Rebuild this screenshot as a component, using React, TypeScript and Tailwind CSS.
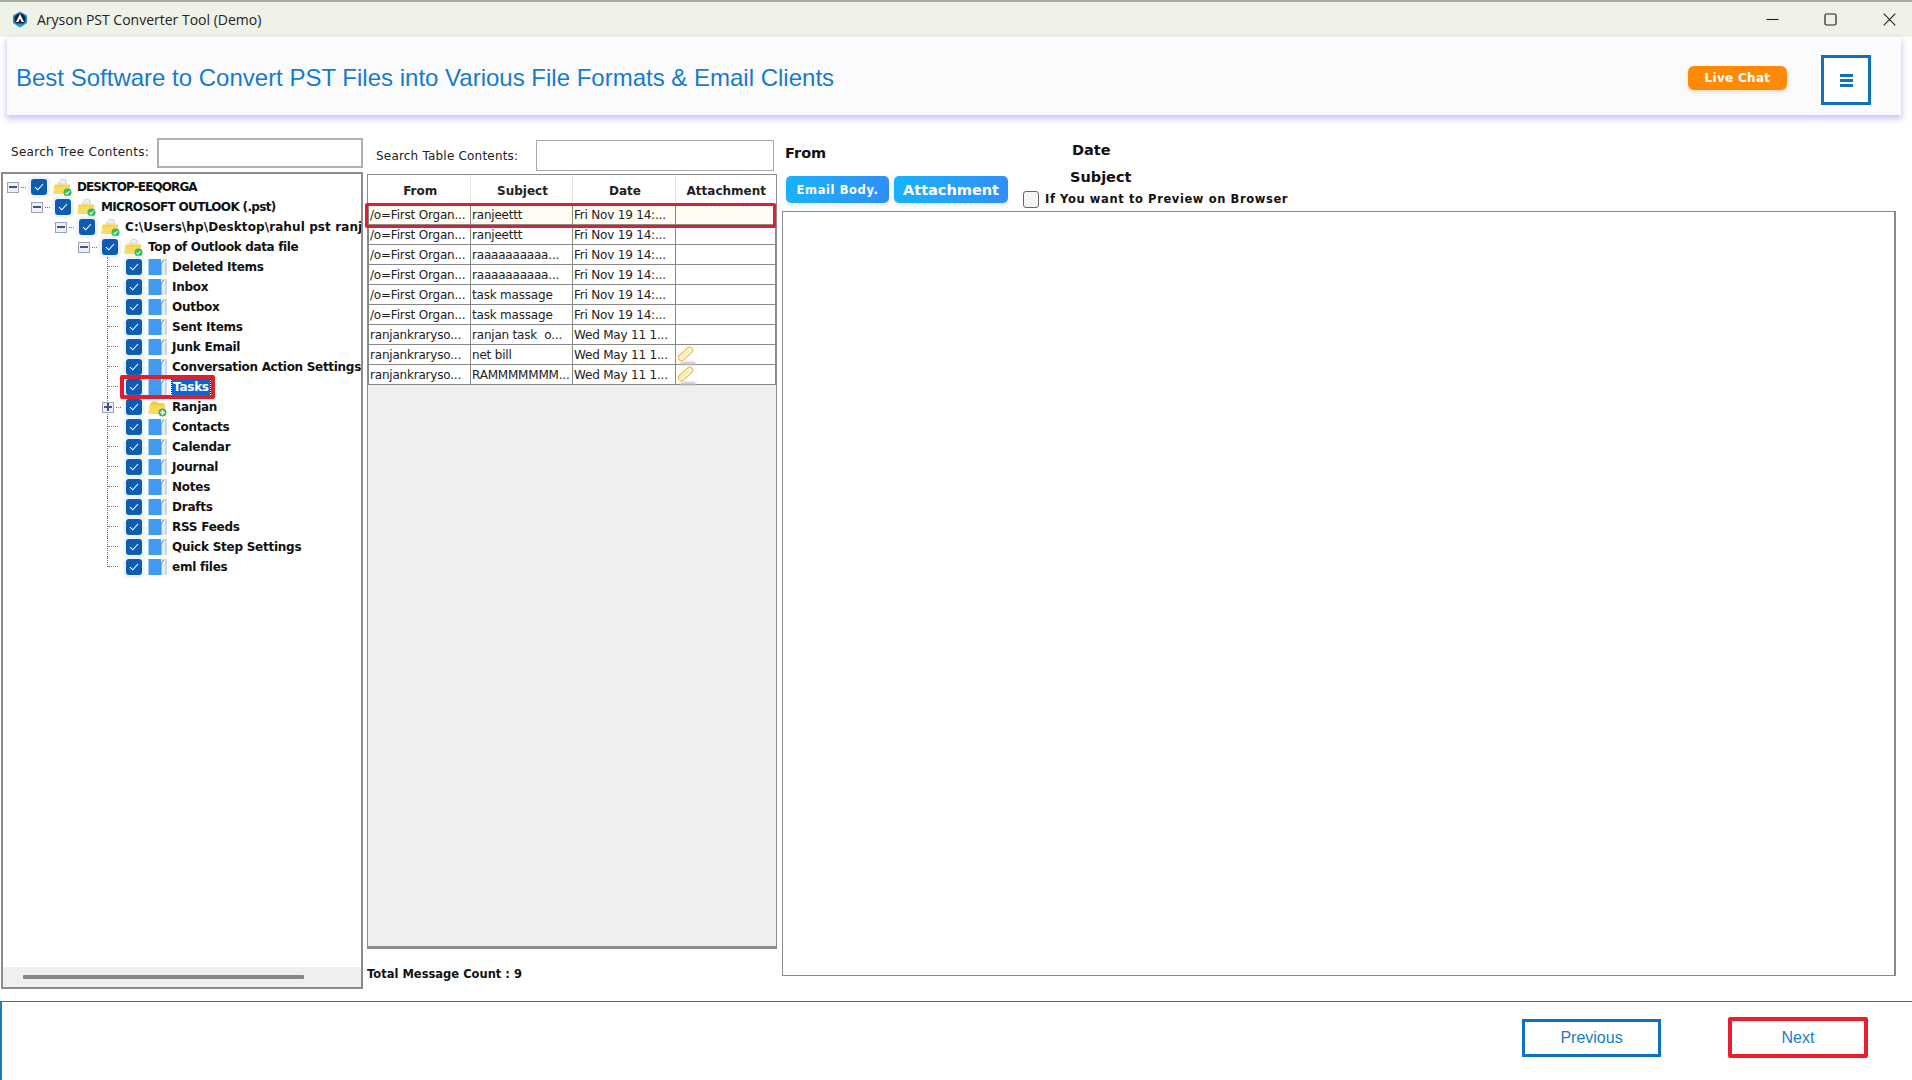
const DEJAVU = "font-['DejaVu_Sans',sans-serif]";

const TREE = [
  { label: "DESKTOP-EEQORGA", level: 0, icon: "folder", expander: "minus", track: "tracking-[-0.9px]" },
  { label: "MICROSOFT OUTLOOK (.pst)", level: 1, icon: "folder", expander: "minus", track: "tracking-[-0.65px]" },
  { label: "C:\\Users\\hp\\Desktop\\rahul pst ranj", level: 2, icon: "folder", expander: "minus", track: "tracking-[0.1px]" },
  { label: "Top of Outlook data file", level: 3, icon: "folder", expander: "minus", track: "tracking-[-0.35px]" },
  { label: "Deleted Items", level: 4, icon: "doc" },
  { label: "Inbox", level: 4, icon: "doc" },
  { label: "Outbox", level: 4, icon: "doc" },
  { label: "Sent Items", level: 4, icon: "doc" },
  { label: "Junk Email", level: 4, icon: "doc" },
  { label: "Conversation Action Settings", level: 4, icon: "doc", track: "tracking-[-0.3px]" },
  { label: "Tasks", level: 4, icon: "doc", selected: true },
  { label: "Ranjan", level: 4, icon: "folderPlus", expander: "plus" },
  { label: "Contacts", level: 4, icon: "doc" },
  { label: "Calendar", level: 4, icon: "doc" },
  { label: "Journal", level: 4, icon: "doc" },
  { label: "Notes", level: 4, icon: "doc" },
  { label: "Drafts", level: 4, icon: "doc" },
  { label: "RSS Feeds", level: 4, icon: "doc" },
  { label: "Quick Step Settings", level: 4, icon: "doc" },
  { label: "eml files", level: 4, icon: "doc" },
];

const ROWS = [
  ["/o=First Organ...", "ranjeettt", "Fri Nov 19 14:...", false],
  ["/o=First Organ...", "ranjeettt", "Fri Nov 19 14:...", false],
  ["/o=First Organ...", "raaaaaaaaaa...", "Fri Nov 19 14:...", false],
  ["/o=First Organ...", "raaaaaaaaaa...", "Fri Nov 19 14:...", false],
  ["/o=First Organ...", "task massage", "Fri Nov 19 14:...", false],
  ["/o=First Organ...", "task massage", "Fri Nov 19 14:...", false],
  ["ranjankraryso...", "ranjan task  o...", "Wed May 11 1...", false],
  ["ranjankraryso...", "net bill", "Wed May 11 1...", true],
  ["ranjankraryso...", "RAMMMMMMM...", "Wed May 11 1...", true],
] as const;

function Logo() {
  return (
    <svg width="16" height="17" viewBox="0 0 16 17">
      <path d="M8 0.5 15 4.5V12L8 16.5 1 12V4.5Z" fill="#1d8fd6" />
      <circle cx="8" cy="8" r="5.6" fill="#16233a" />
      <path d="M8 3 12 11H9.6L8 7.6 6.4 11H4Z" fill="#ffffff" />
      <path d="M5 12.5H11L8 15Z" fill="#2b9be0" />
    </svg>
  );
}

function Check() {
  return (
    <span className="flex h-4 w-4 shrink-0 items-center justify-center rounded-[3px] bg-[#0b5cb5] shadow-[0_0_2px_3px_#eef2f6]">
      <svg width="10" height="8" viewBox="0 0 10 8" fill="none">
        <path d="M1 4.2 3.8 6.8 9 1" stroke="#ffffff" strokeWidth="1.1" />
      </svg>
    </span>
  );
}

function FolderIcon({ badge }: { badge: "check" | "plus" }) {
  return (
    <svg width="19" height="19" viewBox="0 0 19 19" className="shrink-0">
      {badge === "check" && <path d="M5 6 8.5 0.8 13 2.2 13.5 6Z" fill="#eceef2" stroke="#b9bdc6" strokeWidth="0.6" />}
      {badge === "plus" && <path d="M2 6 4 3.5H9L10.5 5H16V8H2Z" fill="#f2c93f" />}
      <path d="M1.5 6.5H17V16H0.5Z" fill="#f6d44e" />
      <path d="M1 9H17V16H0.5Z" fill="#f8dc62" />
      <circle cx="14.5" cy="14.5" r="4" fill="#37b85a" />
      {badge === "plus" ? (
        <path d="M14.5 12V17M12 14.5H17" stroke="#ffffff" strokeWidth="1.4" />
      ) : (
        <path d="M12.6 14.6 14 16 16.5 13" stroke="#ffffff" strokeWidth="1.1" fill="none" />
      )}
    </svg>
  );
}

function DocIcon() {
  return (
    <svg width="19" height="18" viewBox="0 0 19 18" className="shrink-0">
      <rect x="0.5" y="1" width="12.5" height="16" fill="#429bf2" />
      <path d="M13 1H18V17H13Z" fill="#e4eef9" />
      <path d="M13 6 16 1.5" stroke="#3a8fe6" strokeWidth="1" fill="none" />
      <path d="M13 6V17" stroke="#3a8fe6" strokeWidth="1" />
      <path d="M18 1V17" stroke="#8fbce9" strokeWidth="1" />
    </svg>
  );
}

function Expander({ kind }: { kind: string }) {
  return (
    <span className="relative flex h-[11px] w-[12px] shrink-0 items-center justify-center border border-[#9aa3b2] bg-[#eef0f5]">
      <span className="h-[2px] w-[8px] bg-[#44528a]" />
      {kind === "plus" && <span className="absolute h-[8px] w-[2px] bg-[#44528a]" />}
      <span className="absolute left-[13px] top-1/2 w-[5px] border-t border-dotted border-[#777]" />
    </span>
  );
}

function TreeRow({ item, last }: { item: (typeof TREE)[number]; last: boolean }) {
  const leaf = item.level === 4;
  return (
    <div className="relative flex h-5 items-center">
      <span style={{ width: item.level * 24 + (item.level < 3 ? 4 : 3) }} className="shrink-0" />
      <span className="relative flex h-5 w-[12px] shrink-0 items-center">
        {leaf && (
          <span className={`absolute left-[5px] top-0 border-l border-dotted border-[#777] ${last ? "h-[10px]" : "h-5"}`} />
        )}
        {leaf && !item.expander && <span className="absolute left-[6px] top-[9px] w-[10px] border-t border-dotted border-[#777]" />}
        {item.expander && <Expander kind={item.expander} />}
      </span>
      <span className="ml-[12px] flex items-center">
        <Check />
        <span className="ml-[6px]">
          {item.icon === "doc" ? <DocIcon /> : <FolderIcon badge={item.icon === "folderPlus" ? "plus" : "check"} />}
        </span>
      </span>
      <span
        className={`ml-[5px] whitespace-nowrap text-[12px] leading-4 font-bold ${item.track ?? "tracking-[-0.25px]"} ${
          item.selected ? "bg-[#0a68cf] px-px text-white outline-1 outline-dotted outline-[#111]" : "text-[#111]"
        }`}
      >
        {item.label}
      </span>
      {item.selected && (
        <span className="absolute left-[117px] top-[-2px] z-10 h-[24px] w-[95px] rounded-[2px] border-[4px] border-[#e11d2e]" />
      )}
    </div>
  );
}

function Paperclip() {
  return (
    <span className="relative flex h-[19px] w-[20px] items-center">
      <span className="absolute bottom-[-1px] left-[4px] h-[3px] w-[16px] rounded-full bg-[#c4c4c4] blur-[1px]" />
      <svg width="19" height="19" viewBox="0 0 19 19" fill="none" className="relative">
        <rect x="1" y="6" width="17" height="6" rx="3" transform="rotate(-42 9.5 9)" stroke="#f3bb4a" strokeWidth="1.2" fill="#fffaf0" />
        <path d="M4.5 13 13.5 5" stroke="#f7cf7c" strokeWidth="1" />
      </svg>
    </span>
  );
}

export default function App() {
  return (
    <div className={`flex h-[1080px] w-[1912px] flex-col overflow-hidden bg-white ${DEJAVU}`}>
      {/* title bar */}
      <div className="flex h-[37px] shrink-0 items-center border-t-2 border-[#a9ab9f] bg-[#eff2e6]">
        <span className="ml-[12px]">
          <Logo />
        </span>
        <span className="ml-[9px] font-['Open_Sans',sans-serif] text-[14px] text-[#222]">Aryson PST Converter Tool (Demo)</span>
        <div className="ml-auto flex items-center pr-[16px]">
          <svg width="13" height="13" viewBox="0 0 13 13" className="mr-[45px]">
            <path d="M0.5 6.5H12.5" stroke="#222" strokeWidth="1.1" />
          </svg>
          <svg width="13" height="13" viewBox="0 0 13 13" className="mr-[46px]">
            <rect x="1" y="1" width="11" height="11" rx="1.5" fill="none" stroke="#222" strokeWidth="1.2" />
          </svg>
          <svg width="13" height="13" viewBox="0 0 13 13">
            <path d="M0.7 0.7 12.3 12.3M12.3 0.7 0.7 12.3" stroke="#222" strokeWidth="1.1" />
          </svg>
        </div>
      </div>

      {/* banner */}
      <div className="ml-[7px] mr-[11px] flex h-[78px] shrink-0 items-center bg-[#fbfbfe] pt-[4px] shadow-[0_3px_6px_1px_#c9c9f8]">
        <h1 className="ml-[9px] font-['Liberation_Sans',sans-serif] text-[24px] font-normal text-[#167bcd]">
          Best Software to Convert PST Files into Various File Formats &amp; Email Clients
        </h1>
        <button className="ml-auto flex h-[24px] w-[99px] items-center justify-center rounded-[6px] bg-[#ff8a05] text-[12px] font-bold tracking-[0.3px] text-white shadow-[0_2px_4px_#e9dcc8]">
          Live Chat
        </button>
        <button className="ml-[34px] mr-[30px] mt-[4px] flex h-[50px] w-[50px] flex-col items-center justify-center gap-[2px] border-[3px] border-[#0f70bd] bg-white">
          <span className="h-[3px] w-[13px] bg-[#0f70bd]" />
          <span className="h-[3px] w-[13px] bg-[#0f70bd]" />
          <span className="h-[3px] w-[13px] bg-[#0f70bd]" />
        </button>
      </div>

      {/* main */}
      <div className="flex h-[886px] shrink-0 pl-[1px] pt-[23px]">
        {/* tree column */}
        <div className="flex h-[851px] w-[362px] shrink-0 flex-col">
          <div className="flex h-[30px] shrink-0 items-center">
            <span className="mb-[2px] ml-[10px] w-[146px] whitespace-nowrap text-[12px] tracking-[0.3px] text-[#222]">Search Tree Contents:</span>
            <span className="h-[30px] flex-1 border-2 border-[#b0b0b0] bg-white" />
          </div>
          <div className="mt-[4px] flex h-[818px] flex-col border-2 border-[#8c8c8c]">
            <div className="flex-1 overflow-hidden pt-[3px]">
              {TREE.map((item, i) => (
                <TreeRow key={item.label} item={item} last={i === TREE.length - 1} />
              ))}
            </div>
            <div className="flex h-[20px] shrink-0 items-start bg-[#efefef] pl-[20px] pt-[8px]">
              <span className="h-[4px] w-[281px] rounded-[1px] bg-[#888888]" />
            </div>
          </div>
        </div>

        {/* table column */}
        <div className="ml-[4px] flex h-[851px] w-[410px] shrink-0 flex-col">
          <div className="flex h-[36px] shrink-0 items-start pt-[2px]">
            <span className="ml-[9px] mt-[7px] w-[160px] whitespace-nowrap text-[12px] tracking-[0.2px] text-[#222]">Search Table Contents:</span>
            <span className="h-[31px] w-[238px] border border-[#a8a8a8] bg-white" />
          </div>
          <div className="relative h-[775px] border border-b-[3px] border-[#8c8c8c] bg-[#efefef]">
            <table className="w-[408px] table-fixed border-collapse bg-white text-[12px] text-[#222]">
              <thead>
                <tr className="h-[29px]">
                  <th className="w-[102px] border-r border-[#e4e4e4] pl-[2px] pt-[3px] font-bold">From</th>
                  <th className="w-[102px] border-r border-[#e4e4e4] pl-[2px] pt-[3px] font-bold">Subject</th>
                  <th className="w-[103px] border-r border-[#e4e4e4] pl-[2px] pt-[3px] font-bold">Date</th>
                  <th className="pl-[1px] pt-[3px] font-bold">Attachment</th>
                </tr>
              </thead>
              <tbody>
                {ROWS.map((row, i) => (
                  <tr key={i} className={`h-[20px] ${i === 0 ? "bg-[#fffcf4]" : ""}`}>
                    {row.slice(0, 3).map((cell, j) => (
                      <td key={j} className="overflow-hidden whitespace-pre border border-[#888] pl-[1px] pt-[1px] leading-[18px] tracking-[-0.2px]">
                        {cell}
                      </td>
                    ))}
                    <td className="border border-[#888] p-0">{row[3] && <Paperclip />}</td>
                  </tr>
                ))}
              </tbody>
            </table>
            <span className="absolute left-[-3px] top-[28px] h-[25px] w-[411px] rounded-[2px] border-[3px] border-[#e11d2e]" />
          </div>
          <div className="mt-[17px] whitespace-nowrap text-[11.5px] font-bold text-[#111]">Total Message Count : 9</div>
        </div>

        {/* preview column */}
        <div className="ml-[5px] flex h-[838px] w-[1114px] shrink-0 flex-col">
          <div className="flex h-[73px] shrink-0">
            <div className="w-[241px] shrink-0 pl-[3px]">
              <div className="pt-[4px] text-[14.5px] font-bold leading-[22px] text-[#111]">From</div>
              <div className="mt-[12px] flex gap-[5px] pl-[1px]">
                <button className="h-[27px] w-[103px] rounded-[5px] bg-gradient-to-r from-[#17b2fb] to-[#2f8ff6] pt-[2px] text-[11.5px] font-bold tracking-[0.6px] text-white shadow-[0_2px_4px_#dde7f2]">
                  Email Body.
                </button>
                <button className="h-[27px] w-[114px] rounded-[5px] bg-gradient-to-r from-[#17b2fb] to-[#2f8ff6] pt-[2px] text-[14.5px] font-bold text-white shadow-[0_2px_4px_#dde7f2]">
                  Attachment
                </button>
              </div>
            </div>
            <div className="flex-1">
              <div className="pl-[49px] text-[14.5px] font-bold leading-[25px] text-[#111]">Date</div>
              <div className="pl-[47px] pt-[1px] text-[14.5px] font-bold leading-[27px] text-[#111]">Subject</div>
              <div className="flex items-center">
                <span className="h-[17px] w-[16px] rounded-[3px] border border-[#666] bg-[#f4f4f4]" />
                <span className="ml-[6px] whitespace-nowrap text-[11.5px] font-bold tracking-[0.6px] text-[#111]">If You want to Preview on Browser</span>
              </div>
            </div>
          </div>
          <div className="h-[765px] border border-r-2 border-[#8a8a8a] bg-white" />
        </div>
      </div>

      {/* footer */}
      <div className="flex h-[79px] shrink-0 items-start border-l-2 border-t border-[#1c7cbb] bg-white pt-[15px] font-['Liberation_Sans',sans-serif] text-[16px] text-[#1b7bc9]">
        <button className="ml-auto mt-[2px] h-[38px] w-[139px] border-[3px] border-[#0d72c0]">Previous</button>
        <button className="ml-[67px] mr-[44px] h-[41px] w-[140px] rounded-[2px] border-[4px] border-[#e81f2c]">Next</button>
      </div>
    </div>
  );
}
